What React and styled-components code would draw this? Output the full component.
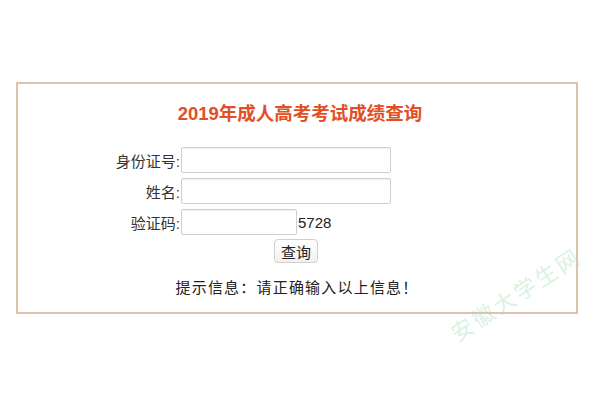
import React from "react";
import styled, { createGlobalStyle } from "styled-components";

const GlobalStyle = createGlobalStyle`
  html, body {
    margin: 0;
    padding: 0;
    background: #ffffff;
    font-family: "Liberation Sans", "Noto Sans CJK SC", sans-serif;
  }
`;

const Page = styled.div`
  position: relative;
  width: 600px;
  height: 400px;
  overflow: hidden;
  padding-top: 82px;
  box-sizing: border-box;
`;

const Panel = styled.div`
  margin: 0 22px 0 16px;
  height: 232px;
  box-sizing: border-box;
  border: 2px solid #dcc4ab;
  padding-top: 19px;
`;

const Title = styled.h1`
  margin: 0;
  padding-left: 6px;
  text-align: center;
  font-size: 18.5px;
  line-height: 22px;
  font-weight: bold;
  color: #e05026;
  font-family: "Liberation Sans", "Noto Sans CJK SC", sans-serif;
`;

const Form = styled.div`
  display: grid;
  grid-template-columns: 90px 210px;
  row-gap: 5px;
  margin: 22px 0 0 73px;
  align-items: center;
`;

const Label = styled.label`
  text-align: right;
  font-size: 15px;
  color: #333;
  padding-right: 1px;
`;

const FieldCell = styled.div`
  display: flex;
  align-items: center;
  gap: 1px;
`;

const Input = styled.input`
  box-sizing: border-box;
  width: ${(p) => p.$w}px;
  height: 26px;
  border: 1px solid #cfcfcf;
  border-radius: 2px;
  box-shadow: inset 0 1px 1px rgba(0, 0, 0, 0.06);
  margin: 0;
  outline: none;
`;

const Code = styled.span`
  font-size: 15px;
  color: #222;
`;

const ButtonRow = styled.div`
  display: flex;
  justify-content: center;
  margin-top: 4px;
  padding-right: 2px;
`;

const Button = styled.button`
  height: 24px;
  width: 44px;
  padding: 0;
  font-size: 15px;
  color: #222;
  background: linear-gradient(#ffffff, #f1f1f1);
  border: 1px solid #cfcfcf;
  border-radius: 4px;
  font-family: "Noto Sans CJK SC", sans-serif;
`;

const Hint = styled.p`
  margin: 13px 0 0;
  text-align: center;
  font-size: 15px;
  letter-spacing: 1.2px;
  color: #222;
`;

const Watermark = styled.div`
  position: absolute;
  left: 452px;
  top: 318px;
  font-size: 22px;
  letter-spacing: 3px;
  color: rgba(160, 220, 180, 0.4);
  transform: rotate(-33deg);
  transform-origin: left center;
  white-space: nowrap;
  font-family: "Noto Sans CJK SC", sans-serif;
`;

const App = () => {
  return (
    <Page>
      <GlobalStyle />
      <Panel>
        <Title>2019年成人高考考试成绩查询</Title>
        <Form>
          <Label>身份证号:</Label>
          <FieldCell>
            <Input $w={210} />
          </FieldCell>
          <Label>姓名:</Label>
          <FieldCell>
            <Input $w={210} />
          </FieldCell>
          <Label>验证码:</Label>
          <FieldCell>
            <Input $w={116} />
            <Code>5728</Code>
          </FieldCell>
        </Form>
        <ButtonRow>
          <Button>查询</Button>
        </ButtonRow>
        <Hint>提示信息：请正确输入以上信息！</Hint>
      </Panel>
      <Watermark>安徽大学生网</Watermark>
    </Page>
  );
};

export default App;
